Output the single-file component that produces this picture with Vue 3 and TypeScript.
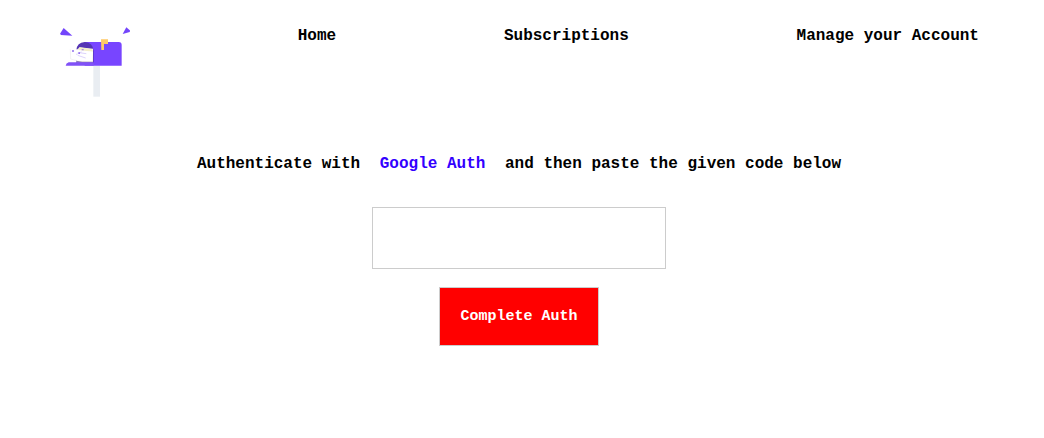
<script setup lang="ts">
import { ref } from 'vue'

const links: string[] = ['Home', 'Subscriptions', 'Manage your Account']
const code = ref('')
</script>

<template>
  <div class="page">
    <nav class="nav">
      <svg class="logo" viewBox="30 21 210 210" role="img" aria-label="Mailbox">
        <path d="M130 136h20v94h-20z" fill="#e9edf2" />
        <path d="M41 24 67 47 32 45 31 40z" fill="#7345fb" />
        <path d="M229 22 241 32 239 36 218 42z" fill="#7345fb" />
        <path d="M104 66h102q9 0 9 9v62H104z" fill="#7845ff" />
        <path d="M79 130V90q2-22 25-24 25 2 27 27v37z" fill="#5434b4" />
        <path d="M79 91l10-9 40 4v40H79z" fill="#f7f3e3" />
        <path d="m88 82 38 6 2 6-42-2z" fill="#f3edc9" />
        <path d="m61 88 14-2 10 4 44 5-3 30-45-3-19-5z" fill="#fff" />
        <path d="m61 88 1 29 19 5" fill="none" stroke="#eeebee" stroke-width="2" />
        <path d="m83 99 12-3m-12 10 24 8m-20-16 22 3m-31 2 5-1" fill="none" stroke="#cbbcf9" stroke-width="2" />
        <path d="M66 91h6v4h-6zM85 97h5v5h-5zM95 88h6v3h-6z" fill="#9270ed" />
        <path d="M79 122q24 5 50 3v4H79z" fill="#8b7aba" />
        <path d="M56 127h75v10H47q1-8 9-10z" fill="#8051f7" />
        <path d="M153 58h21v14h-12v18h-8z" fill="#ffc966" />
      </svg>
      <a v-for="link in links" :key="link" class="nav-link" href="#">{{ link }}</a>
    </nav>
    <form class="auth" @submit.prevent>
      <label class="prompt" for="auth-code">
        Authenticate with <a class="google" href="#">Google Auth</a> and then paste the given code below
      </label>
      <input id="auth-code" v-model="code" class="code" type="text" />
      <button class="submit" type="submit">Complete Auth</button>
    </form>
  </div>
</template>

<style>
body {
  background: #fff;
}
</style>

<style scoped>
.page {
  padding: 27px 6px 40px 0;
  color: #000;
  font: bold 16px/18px "Courier New", "Liberation Mono", monospace;
}

.nav {
  display: flex;
  align-items: flex-start;
  justify-content: space-between;
  padding: 0 59px 0 60px;
}

.logo {
  width: 70px;
  height: 70px;
}

.nav-link {
  color: inherit;
  text-decoration: none;
}

.auth {
  display: flex;
  flex-direction: column;
  align-items: center;
  margin-top: 58px;
}

.google {
  margin: 0 10px;
  color: #3300ff;
  text-decoration: none;
}

.code {
  box-sizing: border-box;
  width: 294px;
  max-width: 100%;
  height: 62px;
  margin: 34px 0 18px;
  padding: 20px;
  border: 1px solid #ccc;
  background: #fff;
  font: inherit;
}

.submit {
  padding: 20px;
  border: 1px solid #ccc;
  border-radius: 0;
  background: #f00;
  color: #fff;
  font: bold 15px/17px "Courier New", "Liberation Mono", monospace;
  cursor: pointer;
}
</style>
